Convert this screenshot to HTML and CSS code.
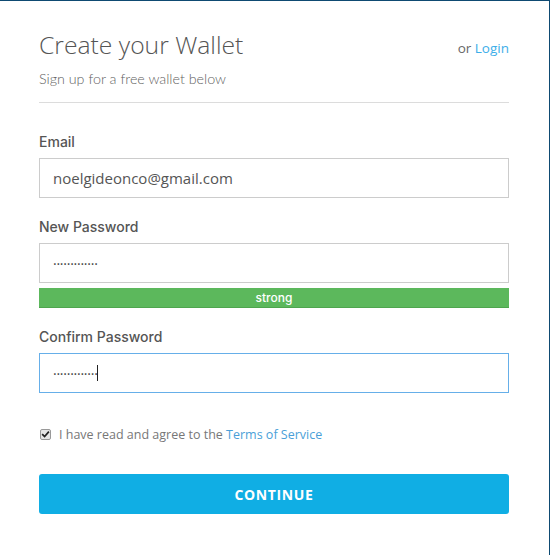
FILE: index.html
```html
<!DOCTYPE html>
<html lang="en">
<head>
<meta charset="utf-8">
<title>Create your Wallet</title>
<link rel="stylesheet" href="styles.css">
</head>
<body>
<div class="frame">
  <div class="card">
    <header class="head">
      <div class="head-row">
        <h1 class="title">Create your Wallet</h1>
        <div class="alt">or <a href="#" class="link">Login</a></div>
      </div>
      <p class="subtitle">Sign up for a free wallet below</p>
    </header>
    <form class="form">
      <div class="group">
        <label class="label" for="email">Email</label>
        <input class="field" id="email" type="text" value="noelgideonco@gmail.com">
      </div>
      <div class="group">
        <label class="label" for="pw">New Password</label>
        <input class="field dots" id="pw" type="text" value="·············">
        <div class="strength">strong</div>
      </div>
      <div class="group">
        <label class="label" for="pw2">Confirm Password</label>
        <div class="field-wrap">
          <input class="field dots focus" id="pw2" type="text" value="·············">
          <span class="caret"></span>
        </div>
      </div>
      <label class="agree">
        <span class="box"><svg viewBox="0 0 12 12" width="12" height="12"><path d="M2.3 6.2 L4.8 8.8 L9.8 3" fill="none" stroke="#222" stroke-width="2.2" stroke-linecap="square"/></svg></span>
        <span class="agree-text">I have read and agree to the <a href="#" class="link terms">Terms of Service</a></span>
      </label>
      <button type="button" class="btn">CONTINUE</button>
    </form>
  </div>
</div>
</body>
</html>
```
FILE: styles.css
```css
html, body {
  margin: 0;
  padding: 0;
  background: #fff;
}
body {
  font-family: "Open Sans", "DejaVu Sans", sans-serif;
  color: #555;
}
.frame {
  width: 550px;
  height: 555px;
  box-sizing: border-box;
  border-top: 1px solid #0e4a72;
  border-right: 1px solid #0e4a72;
  overflow: hidden;
}
.card {
  padding: 0 40px 0 39px;
}
.head {
  padding-top: 28px;
  border-bottom: 1px solid #dcdcdc;
  padding-bottom: 13px;
}
.head-row {
  display: flex;
  justify-content: space-between;
  align-items: flex-start;
}
.title {
  margin: 0;
  font-family: "Open Sans", sans-serif;
  font-weight: 300;
  font-size: 24.7px;
  line-height: 32px;
  color: #555;
}
.alt {
  font-family: "Open Sans", sans-serif;
  font-size: 13.5px;
  line-height: 20px;
  padding-top: 9px;
  color: #666;
}
.link {
  color: #3daee9;
  text-decoration: none;
}
.subtitle {
  margin: 8px 0 0;
  font-family: "Lato", sans-serif;
  font-weight: 300;
  font-size: 14.3px;
  line-height: 20px;
  color: #5f5f5f;
}
.form {
  padding-top: 29px;
}
.group {
  margin-bottom: 19px;
}
.label {
  display: block;
  font-family: "Inter", "Open Sans", sans-serif;
  font-weight: 500;
  font-size: 14px;
  line-height: 20px;
  margin-bottom: 6px;
  color: #555;
}
.field {
  display: block;
  width: 100%;
  height: 40px;
  box-sizing: border-box;
  border: 1px solid #ccc;
  border-radius: 0;
  padding: 0 13px;
  font-family: "Open Sans", sans-serif;
  font-size: 15px;
  color: #555;
  background: #fff;
  outline: none;
}
.dots {
  font-size: 14px;
  letter-spacing: -0.25px;
  color: #444;
}
.focus {
  border-color: #66afe9;
}
.field-wrap {
  position: relative;
}
.caret {
  position: absolute;
  left: 58px;
  top: 12px;
  width: 1px;
  height: 16px;
  background: #222;
}
.strength {
  margin-top: 5px;
  height: 20px;
  box-sizing: border-box;
  background: #5cb85c;
  border-bottom: 1px solid #4ea54e;
  color: #fff;
  font-family: "Inter", "Open Sans", sans-serif;
  font-weight: 500;
  font-size: 12px;
  line-height: 19px;
  text-align: center;
}
.agree {
  display: flex;
  align-items: center;
  gap: 8px;
  margin-top: 31px;
  height: 20px;
  padding-left: 1px;
}
.box {
  width: 11px;
  height: 11px;
  box-sizing: border-box;
  border: 1px solid #999;
  border-radius: 2px;
  background: #e6e6e6;
  display: flex;
  align-items: center;
  justify-content: center;
}
.box svg {
  width: 9px;
  height: 9px;
}
.agree-text {
  font-family: "Open Sans", sans-serif;
  font-size: 12.5px;
  color: #777;
}
.terms {
  color: #4a9fd8;
}
.btn {
  display: block;
  width: 100%;
  height: 40px;
  margin-top: 30px;
  border: 0;
  border-radius: 3px;
  background: #10aee4;
  color: #fff;
  font-family: "Open Sans", sans-serif;
  font-weight: 700;
  font-size: 14px;
  letter-spacing: 0.6px;
}
```
